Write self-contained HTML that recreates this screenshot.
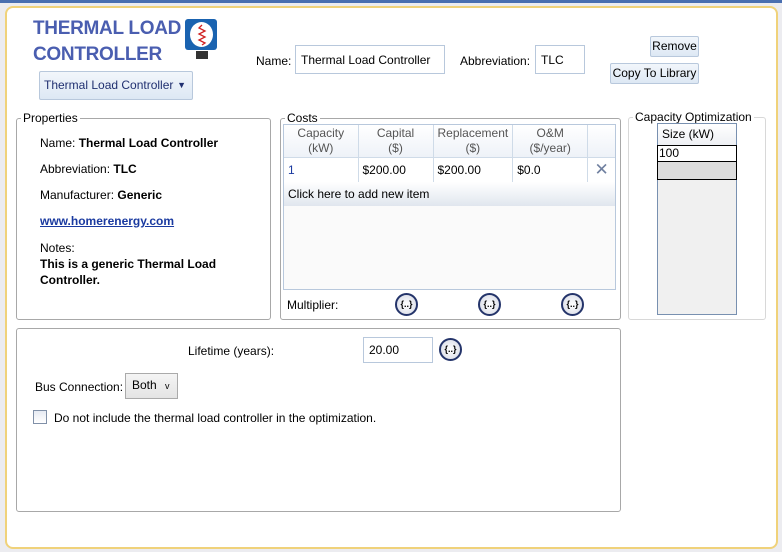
<!DOCTYPE html>
<html><head><style>
*{box-sizing:border-box}
body{margin:0;width:782px;height:552px;background:#ececf0;font-family:"Liberation Sans",sans-serif;font-size:12px;color:#000;position:relative;overflow:hidden}
.abs{position:absolute}
.frame{left:5px;top:6px;width:773px;height:543px;border:2px solid #f0d27a;border-radius:8px;background:#fff}
.grp{border:1px solid #a8a8a8;border-radius:3px}
.lg{position:absolute;top:-8px;background:#fff;padding:0 2px;font-size:12px}
.btn{border:1px solid #b8c8dc;border-radius:2px;background:linear-gradient(#f2f6fb,#dde8f4);font-size:12px;text-align:center;line-height:18px}
.inp{border:1px solid #b8c8dc;background:#fff;padding-left:5px}
.mb{width:23px;height:23px;border-radius:50%;border:2px solid #24346a;background:radial-gradient(#fff,#d4d8e4);font-size:9px;font-weight:bold;text-align:center;line-height:19px}
td{border-right:1px solid #cfdbe8;padding:0 4px}
</style></head><body>
<div class="abs" style="left:0;top:0;width:782px;height:3px;background:#4a6fb0"></div>
<div class="abs frame"></div>
<div class="abs" style="left:33px;top:16px;font-size:19px;font-weight:bold;color:#4a5eb0;line-height:26px;letter-spacing:-0.3px">THERMAL LOAD<br>CONTROLLER</div>
<div class="abs" style="left:185px;top:19px;width:32px;height:31px;background:#1a63b0;border-radius:3px"></div>
<div class="abs" style="left:190px;top:22px;width:23px;height:25px;background:#fff;border-radius:50%"></div>
<svg class="abs" style="left:196px;top:24px" width="12" height="22"><path d="M6 1 L3 4 L9 7 L3 10 L9 13 L3 16 L9 19 L6 21" stroke="#d02020" fill="none" stroke-width="1.3"/></svg>
<div class="abs" style="left:196px;top:51px;width:12px;height:8px;background:#333"></div>
<div class="abs btn" style="left:39px;top:71px;width:154px;height:29px;line-height:27px;text-align:left;padding-left:4px;color:#203070;font-size:12px">Thermal Load Controller <span style="position:absolute;right:6px;font-size:9px">▼</span></div>
<div class="abs" style="left:256px;top:54px">Name:</div>
<div class="abs inp" style="left:295px;top:45px;width:150px;height:29px;line-height:29px">Thermal Load Controller</div>
<div class="abs" style="left:460px;top:54px">Abbreviation:</div>
<div class="abs inp" style="left:535px;top:45px;width:50px;height:29px;line-height:29px">TLC</div>
<div class="abs btn" style="left:650px;top:36px;width:49px;height:21px">Remove</div>
<div class="abs btn" style="left:610px;top:63px;width:89px;height:21px">Copy To Library</div>

<div class="abs grp" style="left:16px;top:118px;width:255px;height:202px"><span class="lg" style="left:4px">Properties</span></div>
<div class="abs" style="left:40px;top:130px;line-height:26px">Name: <b>Thermal Load Controller</b><br>Abbreviation: <b>TLC</b><br>Manufacturer: <b>Generic</b><br><b style="color:#1a3aa0;text-decoration:underline">www.homerenergy.com</b></div>
<div class="abs" style="left:40px;top:240px;line-height:16px">Notes:<br><b>This is a generic Thermal Load<br>Controller.</b></div>

<div class="abs grp" style="left:280px;top:118px;width:341px;height:202px"><span class="lg" style="left:4px">Costs</span></div>
<div class="abs" style="left:283px;top:124px;width:333px;height:166px;border:1px solid #b8c8dc;background:#fafafa"></div>
<table class="abs" style="left:284px;top:125px;width:331px;border-collapse:collapse;font-size:12px">
<tr style="height:32px;background:linear-gradient(#fff,#eef2f8);color:#555;text-align:center;line-height:15px"><td style="width:74px">Capacity<br>(kW)</td><td style="width:75px">Capital<br>($)</td><td style="width:77px">Replacement<br>($)</td><td style="width:75px">O&amp;M<br>($/year)</td><td style="border:0"></td></tr>
<tr style="height:25px;background:#fff;border-top:1px solid #cfdbe8"><td style="color:#1a3aa0">1</td><td>$200.00</td><td>$200.00</td><td>$0.0</td><td style="border:0;color:#7080a0;font-size:17px;text-align:center">✕</td></tr>
<tr style="height:24px;background:linear-gradient(#fff,#e0e6ee)"><td colspan="5" style="border:0">Click here to add new item</td></tr>
</table>
<div class="abs" style="left:287px;top:298px">Multiplier:</div>
<div class="abs mb" style="left:395px;top:293px">{..}</div>
<div class="abs mb" style="left:478px;top:293px">{..}</div>
<div class="abs mb" style="left:561px;top:293px">{..}</div>

<div class="abs grp" style="left:628px;top:117px;width:138px;height:203px;border-color:#d8d8d8"><span class="lg" style="left:4px">Capacity Optimization</span></div>
<div class="abs" style="left:657px;top:123px;width:80px;height:192px;border:1px solid #7890b0;background:#f0f0f0"></div>
<div class="abs" style="left:658px;top:124px;width:78px;height:21px;background:linear-gradient(#fff,#eef0f4);padding-left:4px;line-height:21px">Size (kW)</div>
<div class="abs" style="left:657px;top:145px;width:80px;height:17px;border:1px solid #000;background:#fff;line-height:15px;padding-left:1px">100</div>
<div class="abs" style="left:657px;top:161px;width:80px;height:19px;border:1px solid #000;background:#ddd"></div>

<div class="abs grp" style="left:16px;top:328px;width:605px;height:184px"></div>
<div class="abs" style="left:188px;top:344px">Lifetime (years):</div>
<div class="abs inp" style="left:363px;top:337px;width:70px;height:26px;line-height:24px">20.00</div>
<div class="abs mb" style="left:439px;top:338px">{..}</div>
<div class="abs" style="left:35px;top:380px">Bus Connection:</div>
<div class="abs" style="left:125px;top:373px;width:53px;height:26px;border:1px solid #aaa;background:linear-gradient(#f4f4f4,#e4e4e4);padding-left:6px;line-height:22px">Both <span style="font-size:9px;margin-left:5px">v</span></div>
<div class="abs" style="left:33px;top:410px;width:14px;height:14px;border:1px solid #8090a8;background:linear-gradient(#e6eaf2,#fff)"></div>
<div class="abs" style="left:54px;top:411px">Do not include the thermal load controller in the optimization.</div>
</body></html>
